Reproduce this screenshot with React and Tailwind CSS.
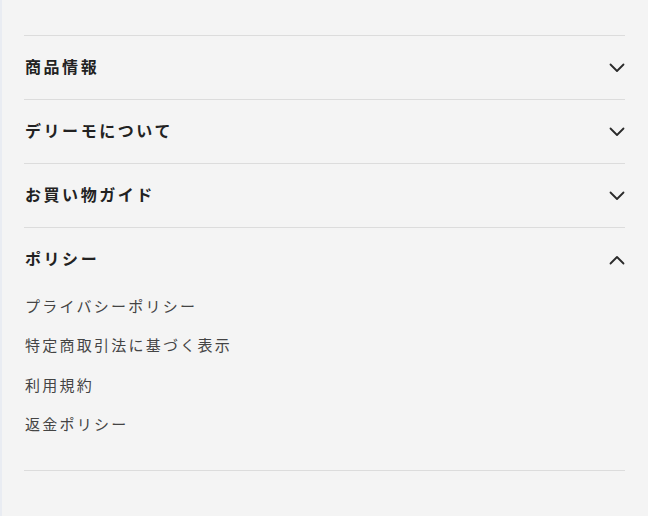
import React, { useState } from 'react';

const sections = [
    { title: '商品情報', links: [] },
    { title: 'デリーモについて', links: [] },
    { title: 'お買い物ガイド', links: [] },
    { title: 'ポリシー', links: ['プライバシーポリシー', '特定商取引法に基づく表示', '利用規約', '返金ポリシー'] },
];

function Chevron({ open }) {
    return (
        <svg width="16" height="10" viewBox="0 0 16 10" fill="none" className={open ? 'rotate-180' : ''}>
            <path d="M1.5 1.5L8 8L14.5 1.5" stroke="#2a2a2a" strokeWidth="1.8" strokeLinecap="round" strokeLinejoin="round" />
        </svg>
    );
}

function App() {
    const [openIndex, setOpenIndex] = useState(3);

    return (
        <div className="min-h-screen bg-[#f4f4f4] border-l-2 border-[#e9ecf2] pt-[35px] pl-[22px] pr-[23px] font-['Liberation_Serif','Noto_Sans_CJK_JP',serif]">
            {sections.map((section, i) => {
                const open = openIndex === i;
                return (
                    <div key={section.title} className="border-t border-[#dcdcdc]">
                        <button
                            type="button"
                            onClick={() => setOpenIndex(open ? null : i)}
                            className="w-full h-[63px] flex items-center justify-between pl-px pr-0"
                        >
                            <span className="text-[16px] font-bold tracking-[0.16em] text-[#222]">{section.title}</span>
                            <Chevron open={open} />
                        </button>

                        {/* links */}
                        {open && section.links.length > 0 && (
                            <ul className="-mt-[4px] pb-[25px]">
                                {section.links.map((link) => (
                                    <li key={link} className="h-[39.5px] flex items-center pl-px text-[15px] tracking-[0.15em] text-[#444]">
                                        {link}
                                    </li>
                                ))}
                            </ul>
                        )}
                    </div>
                );
            })}
            <div className="border-t border-[#dcdcdc]"></div>
        </div>
    );
}

export default App;
